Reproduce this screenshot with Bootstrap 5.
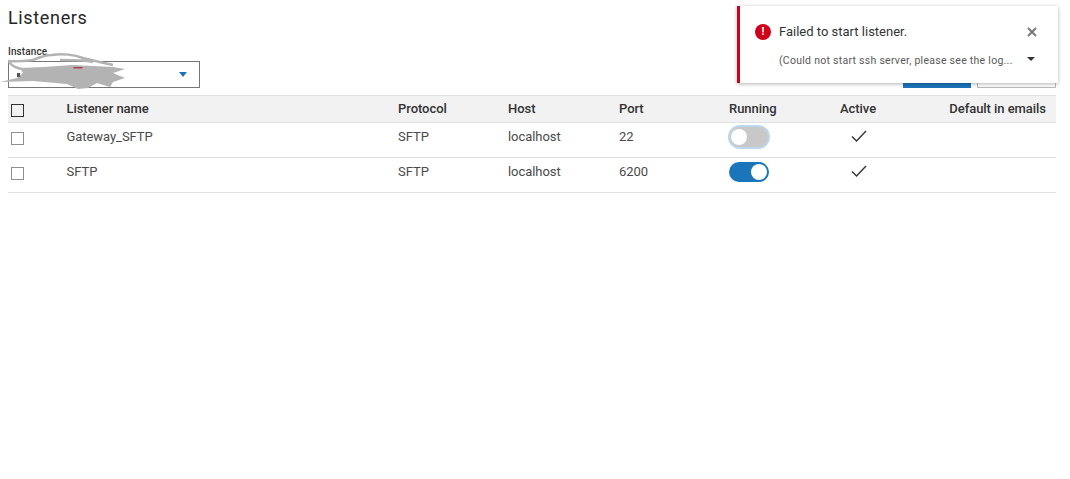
<!DOCTYPE html>
<html lang="en">
<head>
<meta charset="utf-8">
<title>Listeners</title>
<link href="https://cdn.jsdelivr.net/npm/bootstrap@5.3.0/dist/css/bootstrap.min.css" rel="stylesheet">
<style>
body { font-family: Roboto, "Liberation Sans", sans-serif; font-size: 13px; color: #333; background: #fff; }
.page-wrap { padding: 0 14px 0 8px; position: relative; height: 479px; overflow: hidden; }
.page-title { font-size: 18px; font-weight: 400; color: #262626; line-height: 22px; margin: 0; padding-top: 7px; letter-spacing: .65px; }
.filter-row { height: 41px; margin-top: 18px; align-items: flex-end; }
.inst-wrap { width: 192px; position: relative; }
.inst-label { font-size: 10px; font-weight: 500; color: #333; line-height: 12px; display: block; margin-bottom: 3px; letter-spacing: .1px; }
.inst-box { height: 27px; border: 1px solid #767676; display: flex; align-items: center; justify-content: flex-end; padding-right: 12px; }
.caret-blue { width: 0; height: 0; border-left: 4.5px solid transparent; border-right: 4.5px solid transparent; border-top: 5px solid #1b75bb; }
.scribble { position: absolute; left: -8px; top: 4px; width: 130px; height: 40px; }
.act-main { width: 68px; height: 27px; background: #1b75bb; border: 0; border-radius: 0; }
.act-alt { width: 79px; height: 27px; background: #fff; border: 1px solid #bbb; border-radius: 0; margin-left: 6px; }
.grid-tbl { width: 1048px; margin: 7px 0 0; table-layout: fixed; border-collapse: collapse; font-size: 13px; letter-spacing: -.05px; }
.grid-tbl th { background: #f2f2f2; height: 27px; font-weight: 500; color: #333; padding: 0 10px; border-top: 1px solid #e0e0e0; border-bottom: 1px solid #e0e0e0; vertical-align: middle; }
.grid-tbl th.col-name, .grid-tbl td.col-name { padding-left: 9.5px; }
.grid-tbl td { height: 35px; padding: 0 10px 6px; border-bottom: 1px solid #e0e0e0; color: #4a4a4a; vertical-align: middle; }
.grid-tbl th.cell-low { padding: 2px 0 0 3px; }
.grid-tbl td.cell-low { padding: 0 0 4px 3px; }
.box-head { display: block; width: 13px; height: 13px; border: 1px solid #333; }
.box-row { display: block; width: 13px; height: 13px; border: 1px solid #8f8f8f; }
.tog { display: block; width: 40px; height: 20px; border-radius: 10px; position: relative; }
.tog-off { background: #c8c8c8; box-shadow: 0 0 0 2px #bcd6ec; width: 38px; margin-left: 1px; }
.tog-on { background: #1b75bb; }
.tog i { position: absolute; top: 2px; width: 16px; height: 16px; border-radius: 50%; background: #fff; }
.tog-off i { left: 1px; }
.tog-on i { right: 2px; }
.chk { display: block; width: 16px; height: 12px; margin-left: 11px; position: relative; top: -1px; }
.alert-pop { position: absolute; left: 737px; top: 6px; width: 321px; height: 77px; background: #fff; border-left: 3px solid #d0021b; box-shadow: 0 1px 4px rgba(0,0,0,.3); }
.alert-head { font-size: 13px; color: #333; height: 18px; margin-top: 17px; padding-left: 15px; padding-right: 21px; }
.err-dot { width: 16px; height: 16px; border-radius: 50%; background: #d0021b; color: #fff; font-size: 11px; font-weight: 700; line-height: 16px; text-align: center; margin-right: 8px; flex: none; }
.alert-x { width: 10px; height: 10px; }
.alert-msg { font-size: 10.5px; color: #5a5a5a; margin-top: 12px; padding-left: 39px; padding-right: 23px; letter-spacing: .27px; white-space: nowrap; }
.caret-dark { width: 0; height: 0; border-left: 4px solid transparent; border-right: 4px solid transparent; border-top: 4px solid #333; margin-bottom: 4px; }
</style>
</head>
<body>
<div class="page-wrap">
  <h1 class="page-title">Listeners</h1>
  <div class="d-flex filter-row justify-content-between">
    <div class="inst-wrap">
      <span class="inst-label">Instance</span>
      <div class="inst-box"><span class="caret-blue"></span></div>
      <svg class="scribble" viewBox="0 50 130 40" aria-hidden="true">
        <path d="M8 61 C18 62 26 61 33 60 C40 57 45 55 52 55 C62 53 75 55 83 58 C90 60 104 63 113 65 M60 60 C72 60 84 60 93 62 M9 62 C12 66 16 68 22 69" fill="none" stroke="#b3b3b3" stroke-width="2.5"/>
        <path d="M20 68 L43 67 L73 65 L113 67 L125 69 L113 73 L125 78 L113 82 L110 87 L97 83 L88 88 L78 89 L67 84 L33 81 L0 82 L17 78 L23 73 Z" fill="#b3b3b3"/>
        <path d="M73 67 L83 67 L82 68.5 L74 68.5 Z" fill="#a8404e"/>
        <path d="M17 73 L20 73 L20 77 L17 77 Z" fill="#555"/>
      </svg>
    </div>
    <div class="d-flex">
      <button class="btn act-main" type="button" aria-label="Add"></button>
      <button class="btn act-alt" type="button" aria-label="Remove"></button>
    </div>
  </div>
  <table class="grid-tbl">
    <colgroup>
      <col style="width:49px"><col style="width:331px"><col style="width:110px"><col style="width:111px"><col style="width:110px"><col style="width:111px"><col style="width:90px"><col>
    </colgroup>
    <thead>
      <tr>
        <th class="cell-low"><span class="box-head"></span></th>
        <th class="col-name">Listener name</th><th>Protocol</th><th>Host</th><th>Port</th><th>Running</th><th>Active</th>
        <th class="text-end">Default in emails</th>
      </tr>
    </thead>
    <tbody>
      <tr>
        <td class="cell-low"><span class="box-row"></span></td>
        <td class="col-name">Gateway_SFTP</td><td>SFTP</td><td>localhost</td><td>22</td>
        <td><span class="tog tog-off"><i></i></span></td>
        <td><svg class="chk" viewBox="0 0 16 12" aria-hidden="true"><path d="M1 6.5 L5.5 11 L15 1" fill="none" stroke="#333" stroke-width="1.4"/></svg></td>
        <td></td>
      </tr>
      <tr>
        <td class="cell-low"><span class="box-row"></span></td>
        <td class="col-name">SFTP</td><td>SFTP</td><td>localhost</td><td>6200</td>
        <td><span class="tog tog-on"><i></i></span></td>
        <td><svg class="chk" viewBox="0 0 16 12" aria-hidden="true"><path d="M1 6.5 L5.5 11 L15 1" fill="none" stroke="#333" stroke-width="1.4"/></svg></td>
        <td></td>
      </tr>
    </tbody>
  </table>
  <div class="alert-pop">
    <div class="d-flex align-items-center alert-head">
      <span class="err-dot">!</span>
      <span class="flex-grow-1">Failed to start listener.</span>
      <svg class="alert-x" viewBox="0 0 10 10" aria-hidden="true"><path d="M1 1 L9 9 M9 1 L1 9" stroke="#777" stroke-width="2"/></svg>
    </div>
    <div class="d-flex align-items-center justify-content-between alert-msg">
      <span>(Could not start ssh server, please see the log...</span>
      <span class="caret-dark"></span>
    </div>
  </div>
</div>
<script src="https://cdn.jsdelivr.net/npm/bootstrap@5.3.0/dist/js/bootstrap.bundle.min.js"></script>
</body>
</html>
